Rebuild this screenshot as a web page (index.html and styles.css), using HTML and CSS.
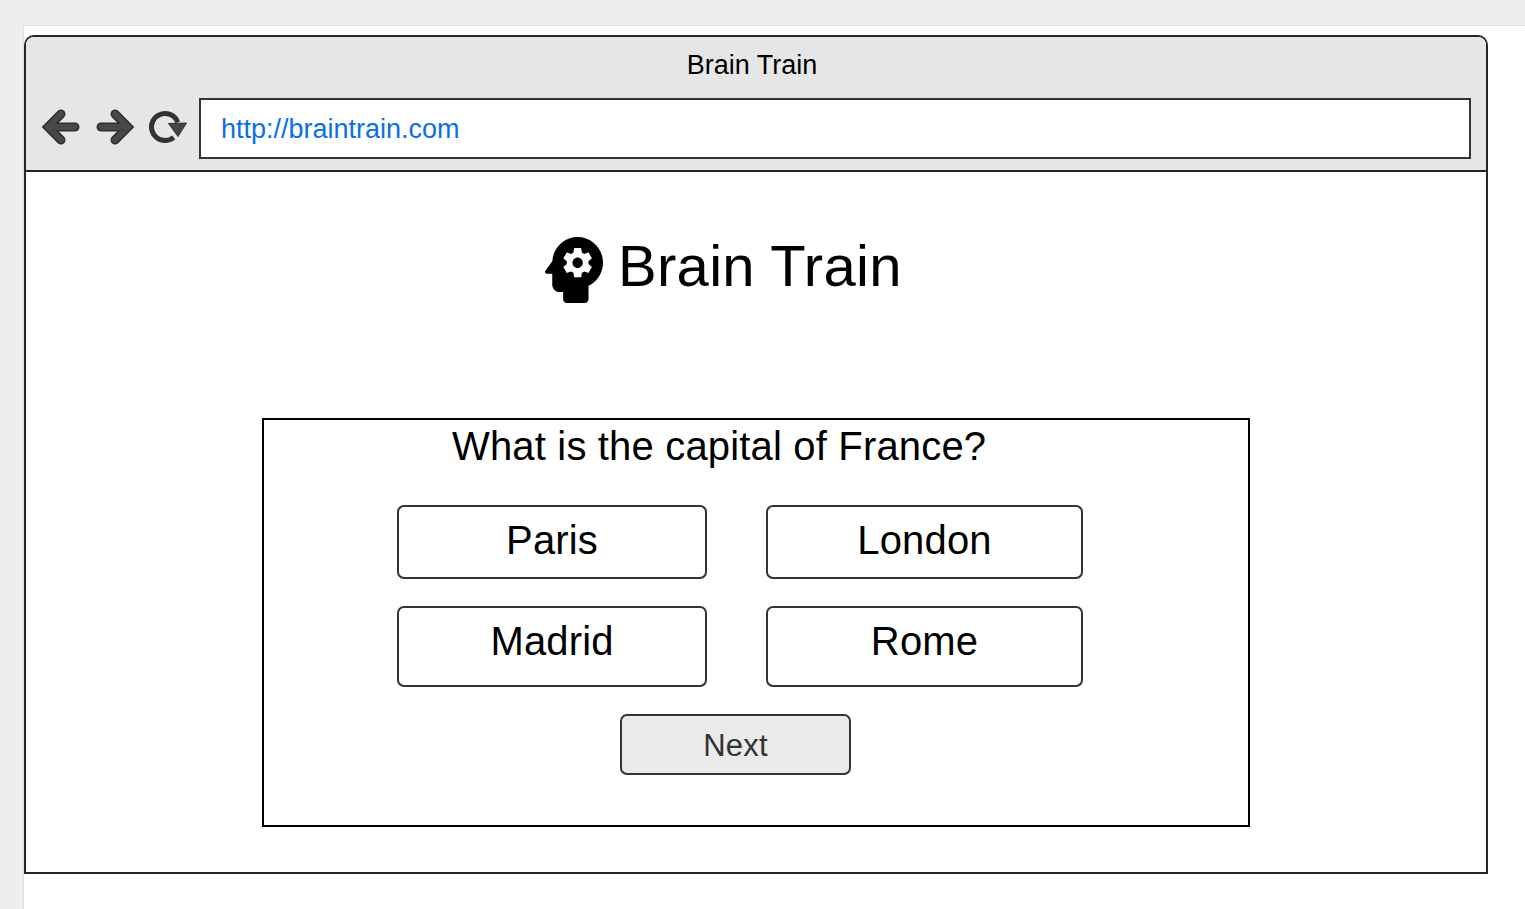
FILE: index.html
```html
<!DOCTYPE html>
<html lang="en">
  <head>
    <meta charset="UTF-8" />
    <meta name="viewport" content="width=device-width, initial-scale=1.0" />
    <title>Brain Train</title>
    <link rel="stylesheet" href="styles.css">
  </head>
  <body>
    <div class="sheet">
      <div class="window">
        <!-- Browser chrome -->
        <div class="chrome">
          <div class="chrome-title">Brain Train</div>
          <div class="chrome-bar">
            <div class="nav-icons">
              <svg class="nav-icon" width="40" height="38" viewBox="0 0 40 38">
                <path class="arrow-edge" d="M20 6 L7 19 L20 32 M7 19 L34 19" />
                <path class="arrow-fill" d="M20 6 L7 19 L20 32 M7 19 L34 19" />
              </svg>
              <svg class="nav-icon" width="40" height="38" viewBox="0 0 40 38">
                <path class="arrow-edge" d="M20 6 L33 19 L20 32 M33 19 L6 19" />
                <path class="arrow-fill" d="M20 6 L33 19 L20 32 M33 19 L6 19" />
              </svg>
              <svg class="nav-icon" width="40" height="38" viewBox="0 0 40 38">
                <path class="reload-ring" d="M24.7 29.3 A13.5 13.5 0 1 1 28.7 14.4" />
                <path class="reload-head" d="M19.5 15.5 L37.5 15 L29 28.5 Z" />
              </svg>
            </div>
            <div class="url-box">http://braintrain.com</div>
          </div>
        </div>

        <!-- Page content -->
        <div class="content">
          <div class="brand">
            <svg class="brand-icon" width="58" height="66" viewBox="4 3 16 18" preserveAspectRatio="none">
              <path d="M13 8.57c-.79 0-1.43.64-1.43 1.43s.64 1.43 1.43 1.43 1.43-.64 1.43-1.43-.64-1.43-1.43-1.43z" />
              <path d="M13 3C9.25 3 6.2 5.94 6.02 9.64L4.1 12.2c-.25.33-.01.8.4.8H6v3c0 1.1.9 2 2 2h1v2c0 .55.45 1 1 1h5c.55 0 1-.45 1-1v-3.68c2.36-1.12 4-3.53 4-6.32 0-3.87-3.13-7-7-7zm3 7c0 .13-.01.26-.02.39l.83.66c.08.06.1.16.05.25l-.8 1.39c-.05.09-.16.12-.24.09l-.99-.4c-.21.16-.43.29-.67.39L14 13.83c-.01.1-.1.17-.2.17h-1.6c-.1 0-.18-.07-.2-.17l-.15-1.06c-.25-.1-.47-.23-.68-.39l-.99.4c-.09.03-.2 0-.25-.09l-.8-1.39c-.05-.08-.03-.19.05-.25l.84-.66c-.01-.13-.02-.26-.02-.39s.02-.27.04-.39l-.85-.66c-.08-.06-.1-.16-.05-.26l.8-1.38c.05-.09.15-.12.24-.09l1 .4c.2-.15.43-.29.67-.39l.15-1.06c.02-.1.1-.17.2-.17h1.6c.1 0 .18.07.2.17l.15 1.06c.24.1.46.23.67.39l1-.4c.09-.03.2 0 .24.09l.8 1.38c.05.09.03.2-.05.26l-.85.66c.03.12.04.25.04.39z" />
            </svg>
            <h1 class="brand-name">Brain Train</h1>
          </div>

          <div class="quiz">
            <p class="question">What is the capital of France?</p>
            <div class="answers">
              <button class="answer">Paris</button>
              <button class="answer">London</button>
              <button class="answer">Madrid</button>
              <button class="answer">Rome</button>
            </div>
            <button class="next-button">Next</button>
          </div>
        </div>
      </div>
    </div>
  </body>
</html>
```

FILE: styles.css
```css
html,
body {
  height: 100%;
}
body {
  margin: 0;
  overflow: hidden;
  background-color: #eeeeee;
  font-family: "Liberation Sans", Arial, sans-serif;
  color: #000;
}
.sheet {
  box-sizing: border-box;
  height: 884px;
  margin: 25px 0 0 23px;
  padding-top: 9px;
  background-color: #fff;
  border-top: 1px solid #e0e0e0;
  border-left: 1px solid #e0e0e0;
}
.window {
  box-sizing: border-box;
  width: 1464px;
  height: 839px;
  border: 2px solid #262626;
  border-radius: 10px 10px 0 0;
}
.chrome {
  box-sizing: border-box;
  height: 135px;
  background-color: #e6e6e6;
  border-bottom: 2px solid #222;
  border-radius: 8px 8px 0 0;
}
.chrome-title {
  height: 61px;
  padding-top: 13px;
  box-sizing: border-box;
  line-height: 31px;
  font-size: 27px;
  text-align: center;
  margin-left: -8px;
}
.chrome-bar {
  display: flex;
  padding-right: 15px;
}
.nav-icons {
  display: flex;
  gap: 14px;
  width: 173px;
  box-sizing: border-box;
  padding: 10px 0 0 15px;
}
.nav-icon {
  display: block;
}
.arrow-edge,
.arrow-fill {
  fill: none;
  stroke-linecap: round;
  stroke-linejoin: miter;
}
.arrow-edge {
  stroke: #2f2f2f;
  stroke-width: 9px;
}
.arrow-fill {
  stroke: #484848;
  stroke-width: 6px;
}
.reload-ring {
  fill: none;
  stroke: #333;
  stroke-width: 5px;
}
.reload-head {
  fill: #444;
  stroke: #2f2f2f;
  stroke-width: 1px;
}
.url-box {
  flex: 1;
  box-sizing: border-box;
  height: 61px;
  padding-left: 20px;
  background-color: #fff;
  border: 2px solid #333;
  line-height: 59px;
  font-size: 27px;
  color: #0a6fe6;
}
.content {
  padding: 65px 0 0 236px;
}
.brand {
  display: flex;
  gap: 15px;
  padding-left: 283px;
}
.brand-icon {
  display: block;
  flex: none;
}
.brand-name {
  margin: 0;
  font-size: 58px;
  font-weight: normal;
  letter-spacing: 0.3px;
  line-height: 58px;
}
.quiz {
  box-sizing: border-box;
  width: 988px;
  height: 409px;
  margin-top: 115px;
  border: 2px solid #000;
}
.question {
  margin: 0;
  padding-left: 188px;
  font-size: 40px;
  letter-spacing: 0.17px;
  line-height: 52px;
}
.answers {
  display: grid;
  grid-template-columns: 310px 317px;
  grid-template-rows: 74px 81px;
  gap: 27px 59px;
  margin: 33px 0 0 133px;
}
.answer {
  display: flex;
  justify-content: center;
  align-items: flex-start;
  box-sizing: border-box;
  padding: 10px 0 0;
  background-color: #fff;
  border: 2px solid #333;
  border-radius: 7px;
  font-family: inherit;
  font-size: 40px;
  letter-spacing: 0.15px;
  line-height: 46px;
  color: #000;
}
.next-button {
  display: block;
  box-sizing: border-box;
  width: 231px;
  height: 61px;
  margin: 27px 0 0 356px;
  padding: 2px 0 0;
  background-color: #eaeaea;
  border: 2px solid #333;
  border-radius: 7px;
  font-family: inherit;
  font-size: 31px;
  letter-spacing: 0.2px;
  color: #333;
}
```
